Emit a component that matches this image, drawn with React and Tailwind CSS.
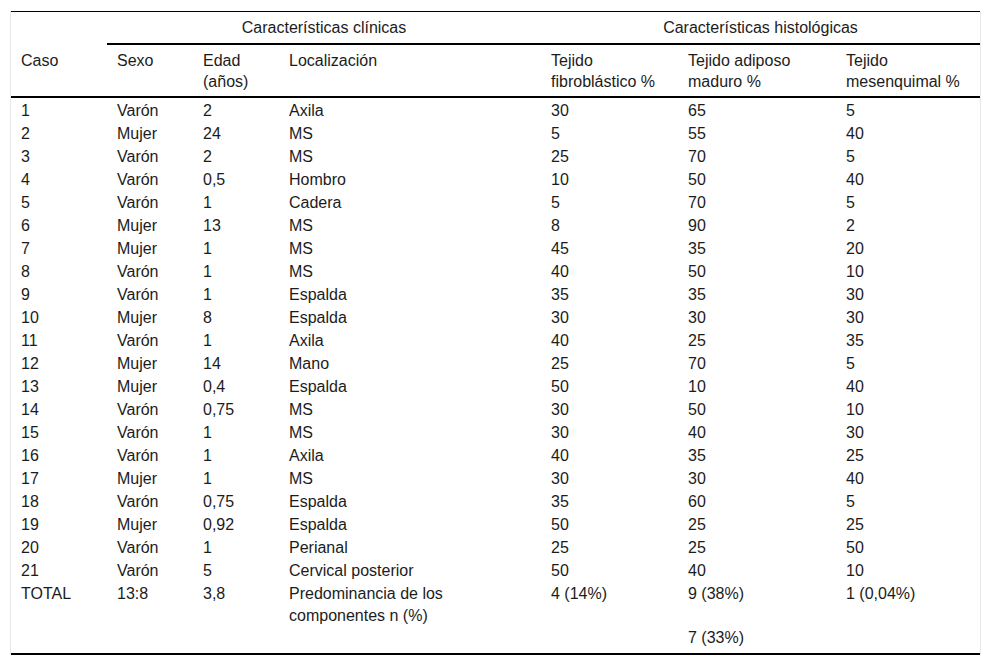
const rows = [
  ['1', 'Varón', '2', 'Axila', '30', '65', '5'],
  ['2', 'Mujer', '24', 'MS', '5', '55', '40'],
  ['3', 'Varón', '2', 'MS', '25', '70', '5'],
  ['4', 'Varón', '0,5', 'Hombro', '10', '50', '40'],
  ['5', 'Varón', '1', 'Cadera', '5', '70', '5'],
  ['6', 'Mujer', '13', 'MS', '8', '90', '2'],
  ['7', 'Mujer', '1', 'MS', '45', '35', '20'],
  ['8', 'Varón', '1', 'MS', '40', '50', '10'],
  ['9', 'Varón', '1', 'Espalda', '35', '35', '30'],
  ['10', 'Mujer', '8', 'Espalda', '30', '30', '30'],
  ['11', 'Varón', '1', 'Axila', '40', '25', '35'],
  ['12', 'Mujer', '14', 'Mano', '25', '70', '5'],
  ['13', 'Mujer', '0,4', 'Espalda', '50', '10', '40'],
  ['14', 'Varón', '0,75', 'MS', '30', '50', '10'],
  ['15', 'Varón', '1', 'MS', '30', '40', '30'],
  ['16', 'Varón', '1', 'Axila', '40', '35', '25'],
  ['17', 'Mujer', '1', 'MS', '30', '30', '40'],
  ['18', 'Varón', '0,75', 'Espalda', '35', '60', '5'],
  ['19', 'Mujer', '0,92', 'Espalda', '50', '25', '25'],
  ['20', 'Varón', '1', 'Perianal', '25', '25', '50'],
  ['21', 'Varón', '5', 'Cervical posterior', '50', '40', '10'],
];

const th = 'pl-[10px] pt-[5px] pb-[4px] text-left font-normal align-top leading-[21px] border-b-2 border-black';
const td = 'pl-[10px] pt-[2px] pb-0 align-top leading-[21px]';
const tt = 'pl-[10px] pt-[2px] pb-[4px] align-top leading-[22px] border-b-2 border-black';

export default function App() {
  return (
    <div
      className="pt-[11px] pl-[10px] bg-white min-h-[666px] text-[16px] text-[#1c1c1c]"
      style={{ fontFamily: '"Liberation Sans", Arial, sans-serif' }}
    >
      <div className="w-[971px] border-x border-[#e8e8e8]">
        <table className="w-[969px] table-fixed border-separate border-spacing-0 border-t border-black">
          <colgroup>
            <col className="w-[96px]" />
            <col className="w-[86px]" />
            <col className="w-[86px]" />
            <col className="w-[262px]" />
            <col className="w-[137px]" />
            <col className="w-[158px]" />
            <col className="w-[144px]" />
          </colgroup>
          <thead>
            <tr>
              <th className="p-0"></th>
              <th colSpan={3} className="px-[10px] py-[5px] text-center font-normal leading-[21px] border-b-2 border-black">
                Características clínicas
              </th>
              <th colSpan={3} className="px-[10px] py-[5px] text-center font-normal leading-[21px] border-b-2 border-black">
                Características histológicas
              </th>
            </tr>
            <tr>
              <th className={th}>Caso</th>
              <th className={th}>Sexo</th>
              <th className={th}>Edad<br />(años)</th>
              <th className={th}>Localización</th>
              <th className={th}>Tejido<br />fibroblástico %</th>
              <th className={th}>Tejido adiposo<br />maduro %</th>
              <th className={th}>Tejido<br />mesenquimal %</th>
            </tr>
          </thead>
          <tbody>
            {rows.map((r) => (
              <tr key={r[0]}>
                {r.map((c, i) => (
                  <td key={i} className={td}>{c}</td>
                ))}
              </tr>
            ))}
            <tr>
              <td className={tt}>TOTAL</td>
              <td className={tt}>13:8</td>
              <td className={tt}>3,8</td>
              <td className={tt}>Predominancia de los<br />componentes n (%)</td>
              <td className={tt}>4 (14%)</td>
              <td className={tt}>9 (38%)<br /><br />7 (33%)</td>
              <td className={tt}>1 (0,04%)</td>
            </tr>
          </tbody>
        </table>
      </div>
    </div>
  );
}
